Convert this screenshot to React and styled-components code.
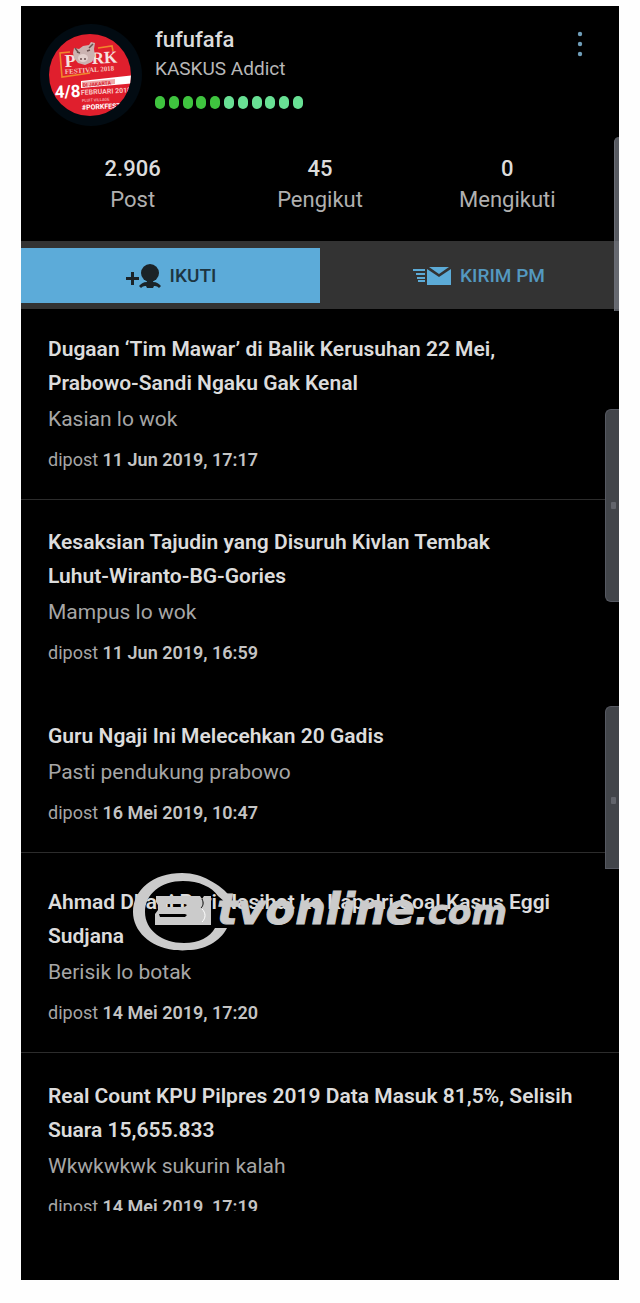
import React from 'react';
import styled, { createGlobalStyle } from 'styled-components';

const posts = [
  {
    title: 'Dugaan ‘Tim Mawar’ di Balik Kerusuhan 22 Mei,\nPrabowo-Sandi Ngaku Gak Kenal',
    comment: 'Kasian lo wok',
    date: '11 Jun 2019, 17:17',
    space: 23,
    divider: true,
  },
  {
    title: 'Kesaksian Tajudin yang Disuruh Kivlan Tembak\nLuhut-Wiranto-BG-Gories',
    comment: 'Mampus lo wok',
    date: '11 Jun 2019, 16:59',
    space: 25,
    divider: false,
  },
  {
    title: 'Guru Ngaji Ini Melecehkan 20 Gadis',
    comment: 'Pasti pendukung prabowo',
    date: '16 Mei 2019, 10:47',
    space: 26,
    divider: true,
  },
  {
    title: 'Ahmad Dhani Beri Nasihat ke Kapolri Soal Kasus Eggi Sudjana',
    comment: 'Berisik lo botak',
    date: '14 Mei 2019, 17:20',
    space: 32,
    divider: true,
  },
  {
    title: 'Real Count KPU Pilpres 2019 Data Masuk 81,5%, Selisih Suara 15,655.833',
    comment: 'Wkwkwkwk sukurin kalah',
    date: '14 Mei 2019, 17:19',
    space: 26,
    divider: false,
  },
];

const stats = [
  { value: '2.906', label: 'Post' },
  { value: '45', label: 'Pengikut' },
  { value: '0', label: 'Mengikuti' },
];

const REPUTATION = 5;
const REPUTATION_MAX = 11;

const Avatar = () => (
  <AvatarImage viewBox="0 0 102 102" role="img" aria-label="Pork Festival">
    <defs>
      <clipPath id="avatar-clip">
        <circle cx="50" cy="51" r="41" />
      </clipPath>
    </defs>
    <circle cx="51" cy="51" r="51" fill="#020b12" />
    <g clipPath="url(#avatar-clip)">
      <rect width="102" height="102" fill="#e01f2d" />
      <path d="M30 28 L20 29 L22 53 L50 49 M58 24 L72 22 L73 27" fill="none" stroke="#f0872c" strokeWidth="1.6" />
      <g fontFamily="Liberation Serif, serif" fontWeight="700" fill="#f6e3e0">
        <text x="25" y="43" fontSize="18" transform="rotate(-3 25 43)">P</text>
        <text x="52" y="40" fontSize="17" transform="rotate(-3 52 40)">RK</text>
      </g>
      <text
        x="25"
        y="50"
        fontFamily="Liberation Serif, serif"
        fontWeight="700"
        fontSize="7"
        fill="#f6c5be"
        transform="rotate(-4 25 50)"
      >
        FESTIVAL 2018
      </text>
      <path d="M34 24l5 1 4-3 6-1 2-3 4 1-1 6 1 7-3 6-7 3-7-2-4-5-1-5z" fill="#cbb3b1" />
      <ellipse cx="43" cy="34" rx="5" ry="4" fill="#e3d0cd" />
      <path d="M37 28l3 1M47 27l3-1M41 34v2M45 34v2M35 24l3 4M53 20l-4 4" fill="none" stroke="#6b5250" strokeWidth="1.5" />
      <path d="M41 57L96 51V59L41 64z" fill="#fff" />
      <path d="M42 58L75 55V60L42 63z" fill="#f0a9a9" />
      <text x="43" y="63" fontFamily="Roboto, sans-serif" fontWeight="900" fontSize="5" fill="#d9303d" transform="rotate(-5 43 63)">
        DI JAKARTA
      </text>
      <g fontFamily="Roboto, sans-serif" fontWeight="700" fill="#fff">
        <text x="15" y="74" fontSize="17" transform="rotate(-3 15 74)">4/8</text>
        <text x="41" y="71" fontSize="7" fill="#f8c4c4" transform="rotate(-3 41 71)">FEBRUARI 2018</text>
        <text x="42" y="78" fontSize="4" fill="#f3a2a4" transform="rotate(-3 42 78)">PLUIT VILLAGE</text>
        <text x="42" y="86" fontSize="7" transform="rotate(-3 42 86)">#PORKFEST</text>
      </g>
    </g>
  </AvatarImage>
);

const FollowIcon = () => (
  <svg width="36" height="28" viewBox="0 0 36 28" fill="#1b2328" aria-hidden="true">
    <path d="M6 10h3v5h5v3H9v5H6v-5H1v-3h5z" />
    <circle cx="25" cy="11" r="9" />
    <path d="M22 18h6v2c4 0 6 2 8 4l-2 2c-2-2-4-2-5-2l-1 2h-6l-1-2c-1 0-3 0-5 2l-2-2c2-2 4-4 8-4z" />
  </svg>
);

const MessageIcon = () => (
  <svg width="39" height="20" viewBox="0 0 39 20" fill="#5cabd7" aria-hidden="true">
    <path d="M1 3h12v2H1zM4 7h9v2H4zM5 11h8v2H5zM6 14h7v2H6z" />
    <path d="M17 1h20L27 8z" />
    <path d="M15 3l12 8 12-8v16H15z" />
  </svg>
);

const MoreIcon = () => (
  <svg width="6" height="26" viewBox="0 0 6 26" fill="#6f9db8" aria-hidden="true">
    <circle cx="3" cy="3" r="2.2" />
    <circle cx="3" cy="13" r="2.2" />
    <circle cx="3" cy="23" r="2.2" />
  </svg>
);

const ChannelMark = () => (
  <svg width="98" height="78" viewBox="0 0 98 78" fill="#cbcbcb" aria-hidden="true">
    <path d="M49 0C60 0 69 3 76 7C86 12 93 18 97 24L92 29L85 23C79 14 66 8 50 8C28 8 12 21 12 39C12 57 29 70 51 70C66 70 77 64 82 55H94C87 69 71 77 55 77C49 78 44 77 41 77C17 74 0 58 0 39C0 17 20 0 49 0Z" />
    <path
      fillRule="evenodd"
      d="M23 23H67L69 26L71 23H78V52H22V41L25 37V32L23 29ZM33 31V34H52L54 32L52 31ZM26 41L27 44H52L54 42L52 41Z"
    />
    <path d="M69 26C71 30 70 33 68 35" fill="none" stroke="#000" />
    <path d="M69 36C73 40 73 45 69 49" fill="none" stroke="#fff" />
  </svg>
);

const Post = ({ title, comment, date, space, divider }) => (
  <StyledPost $space={space} $divider={divider}>
    <PostTitle>{title}</PostTitle>
    <PostComment>{comment}</PostComment>
    <PostDate>
      dipost <strong>{date}</strong>
    </PostDate>
  </StyledPost>
);

const App = () => {

  return (
    <>
      <GlobalStyle />
      <Page>
        <Screen>
          <Profile>
            <Avatar />
            <ProfileInfo>
              <Username>fufufafa</Username>
              <Rank>KASKUS Addict</Rank>
              <Reputation>
                {Array.from({ length: REPUTATION_MAX }, (_, i) => (
                  <ReputationDot key={i} $filled={i < REPUTATION} />
                ))}
              </Reputation>
            </ProfileInfo>
            <MoreButton type="button" aria-label="Menu">
              <MoreIcon />
            </MoreButton>
          </Profile>
          <Stats>
            {stats.map(({ value, label }) => (
              <Stat key={label}>
                <StatValue>{value}</StatValue>
                <StatLabel>{label}</StatLabel>
              </Stat>
            ))}
          </Stats>
          <Actions>
            <ActionButton type="button" $primary>
              <FollowIcon />
              IKUTI
            </ActionButton>
            <ActionButton type="button">
              <MessageIcon />
              KIRIM PM
            </ActionButton>
          </Actions>
          <Feed>
            {posts.map((post) => (
              <Post key={post.title} {...post} />
            ))}
          </Feed>
          <EdgeStrip />
          <EdgePanel $top={403} $height={193} $grip={92} />
          <EdgePanel $top={700} $height={163} $grip={90} $cut />
          <Watermark>
            <ChannelMark />
            <WatermarkName>tvonline</WatermarkName>
            <WatermarkDomain>.com</WatermarkDomain>
          </Watermark>
        </Screen>
      </Page>
    </>
  );
}

const GlobalStyle = createGlobalStyle`
  * {
    box-sizing: border-box;
  }

  body {
    margin: 0;
    background: #fefefe;
    font-family: Roboto, sans-serif;
  }
`;

const Page = styled.div`
  height: 100vh;
  padding: 6px 21px 23px;
`;

const Screen = styled.main`
  position: relative;
  display: flex;
  flex-direction: column;
  height: 100%;
  padding-bottom: 69px;
  overflow: hidden;
  background: #000;
  color: #dcdcdc;
`;

const Profile = styled.header`
  display: flex;
  flex-shrink: 0;
  align-items: flex-start;
  padding: 18px 32px 0 19px;
`;

const AvatarImage = styled.svg`
  width: 102px;
  height: 102px;
`;

const ProfileInfo = styled.div`
  flex: 1;
  padding-left: 13px;
`;

const Username = styled.h1`
  margin: 0;
  font-size: 22px;
  font-weight: 500;
  line-height: 32px;
`;

const Rank = styled.p`
  margin: 0;
  font-size: 19px;
  line-height: 26px;
  color: #b8b8b8;
`;

const Reputation = styled.div`
  display: flex;
  justify-content: space-between;
  width: 148px;
  margin-top: 14px;
`;

const ReputationDot = styled.span`
  width: 10px;
  height: 13px;
  border-radius: 5px;
  background: ${({ $filled }) => ($filled ? '#3fc43f' : '#68e094')};
`;

const MoreButton = styled.button`
  display: flex;
  padding: 7px 4px;
  border: 0;
  background: none;
`;

const Stats = styled.dl`
  display: flex;
  flex-shrink: 0;
  margin: 0;
  padding: 27px 18px 26px;
`;

const Stat = styled.div`
  display: flex;
  flex: 1;
  flex-direction: column;
  align-items: center;
`;

const StatValue = styled.dd`
  order: -1;
  margin: 0;
  font-size: 22px;
  font-weight: 500;
  line-height: 31px;
`;

const StatLabel = styled.dt`
  font-size: 22px;
  line-height: 31px;
  color: #b0b0b0;
`;

const Actions = styled.div`
  display: flex;
  flex-shrink: 0;
  padding: 7px 0 6px;
  background: #333;
`;

const ActionButton = styled.button`
  display: flex;
  align-items: center;
  justify-content: center;
  gap: 9px;
  width: 50%;
  height: 55px;
  padding: ${({ $primary }) => ($primary ? '0' : '0 0 0 18px')};
  border: 0;
  background: ${({ $primary }) => ($primary ? '#5cabd9' : 'transparent')};
  color: ${({ $primary }) => ($primary ? '#1d3541' : '#5499c0')};
  font-family: inherit;
  font-size: 19px;
  font-weight: 500;
`;

const Feed = styled.section`
  flex: 1;
  min-height: 0;
  overflow: hidden;
`;

const StyledPost = styled.article`
  padding: ${({ $space }) => $space}px 27px 27px;
  border-bottom: 1px solid ${({ $divider }) => ($divider ? '#2c2c2c' : 'transparent')};
`;

const PostTitle = styled.h2`
  margin: 0;
  font-size: 21px;
  font-weight: 600;
  line-height: 34px;
  white-space: pre-line;
`;

const PostComment = styled.p`
  margin: 2px 0 12px;
  font-size: 21px;
  line-height: 34px;
  color: #a6a6a6;
`;

const PostDate = styled.p`
  margin: 0;
  font-size: 18px;
  line-height: 24px;
  color: #a6a6a6;

  strong {
    font-weight: 600;
    color: #c4c4c4;
  }
`;

const EdgeStrip = styled.div`
  position: absolute;
  top: 131px;
  right: 0;
  width: 5px;
  height: 174px;
  border-left: 1px solid #6a6d76;
  border-radius: 5px 0 0 0;
  background: rgba(124, 128, 138, 0.7);
`;

const EdgePanel = styled.div`
  position: absolute;
  top: ${({ $top }) => $top}px;
  right: 0;
  width: 14px;
  height: ${({ $height }) => $height}px;
  border: 1px solid #565962;
  border-right: 0;
  border-radius: ${({ $cut }) => ($cut ? '6px 0 0 0' : '6px 0 0 6px')};
  background: #42454a;

  &::after {
    content: '';
    position: absolute;
    top: ${({ $grip }) => $grip}px;
    left: 5px;
    width: 5px;
    height: 7px;
    border-radius: 1px;
    background: #62656c;
  }
`;

const Watermark = styled.div`
  position: absolute;
  top: 867px;
  left: 112px;
  display: flex;
  align-items: baseline;
  color: #cbcbcb;
  font-family: 'DejaVu Sans', sans-serif;
  font-style: italic;
  font-weight: 700;
  line-height: 48px;
  -webkit-text-stroke: 1px #cbcbcb;

  svg {
    align-self: flex-start;
  }
`;

const WatermarkName = styled.span`
  margin: 12px 0 0 -14px;
  font-size: 43px;
`;

const WatermarkDomain = styled.span`
  font-size: 34px;
`;

export default App;
